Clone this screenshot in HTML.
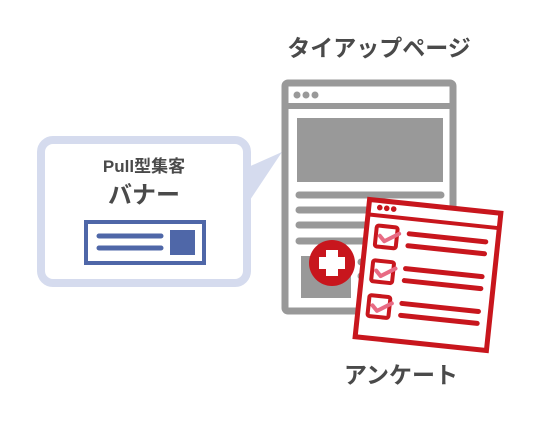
<!DOCTYPE html>
<html><head><meta charset="utf-8"><style>
body{margin:0;width:537px;height:422px;background:#fff;overflow:hidden}
svg{display:block}
text{font-family:"Liberation Sans","Noto Sans CJK JP",sans-serif;font-weight:bold;fill:#4a4a4a}
</style></head><body>
<svg width="537" height="422" viewBox="0 0 537 422">
<path d="M246,168 L282,152 L250,200 Z" fill="#d5dbee"/>
<rect x="41" y="140" width="206" height="143" rx="12" fill="#fff" stroke="#d5dbee" stroke-width="8"/>
<text x="144" y="172" font-size="17" text-anchor="middle">Pull型集客</text>
<text x="144" y="203" font-size="24" text-anchor="middle">バナー</text>
<rect x="86" y="222" width="118" height="41" fill="#fff" stroke="#4f67a8" stroke-width="4"/>
<line x1="99" y1="236" x2="161" y2="236" stroke="#4f67a8" stroke-width="5" stroke-linecap="round"/>
<line x1="99" y1="248" x2="161" y2="248" stroke="#4f67a8" stroke-width="5" stroke-linecap="round"/>
<rect x="170" y="230" width="25" height="25" fill="#4f67a8"/>
<text x="379" y="56" font-size="23" text-anchor="middle">タイアップページ</text>
<rect x="285" y="83" width="168" height="228" rx="3" fill="#fff" stroke="#999" stroke-width="7"/>
<rect x="285" y="103" width="168" height="6" fill="#999"/>
<circle cx="297" cy="95" r="3.5" fill="#999"/><circle cx="306" cy="95" r="3.5" fill="#999"/><circle cx="315" cy="95" r="3.5" fill="#999"/>
<rect x="297" y="118" width="146" height="64" fill="#999"/>
<g stroke="#999" stroke-width="7" stroke-linecap="round">
<line x1="299" y1="195" x2="441" y2="195"/><line x1="299" y1="210" x2="441" y2="210"/><line x1="299" y1="225" x2="441" y2="225"/><line x1="299" y1="241" x2="441" y2="241"/>
<line x1="361" y1="262" x2="380" y2="262"/><line x1="361" y1="276" x2="380" y2="276"/><line x1="361" y1="290" x2="380" y2="290"/>
</g>
<rect x="301" y="256" width="50" height="42" fill="#999"/>
<circle cx="332" cy="263" r="23" fill="#c8161d"/>
<path d="M326,250h12v7h7v12h-7v7h-12v-7h-7v-12h7z" fill="#fff"/>
<g transform="rotate(6 428 275)">
<rect x="362" y="206" width="132" height="138" fill="#fff" stroke="#c8161d" stroke-width="5"/>
<rect x="362" y="219" width="132" height="4" fill="#c8161d"/>
<circle cx="373" cy="213" r="2.8" fill="#c8161d"/><circle cx="380" cy="213" r="2.8" fill="#c8161d"/><circle cx="387" cy="213" r="2.8" fill="#c8161d"/>
<g fill="none" stroke="#c8161d" stroke-width="4">
<rect x="372" y="231" width="21" height="21" rx="2"/><rect x="372" y="266" width="21" height="21" rx="2"/><rect x="372" y="301" width="21" height="21" rx="2"/>
</g>
<g fill="none" stroke="#e86b84" stroke-width="4" stroke-linecap="round" stroke-linejoin="round">
<path d="M376,241l5,5l14,-9"/><path d="M376,276l5,5l14,-9"/><path d="M376,311l5,5l14,-9"/>
</g>
<g stroke="#c8161d" stroke-width="5" stroke-linecap="round">
<line x1="405" y1="236" x2="482" y2="236"/><line x1="405" y1="248" x2="482" y2="248"/>
<line x1="405" y1="271" x2="482" y2="271"/><line x1="405" y1="283" x2="482" y2="283"/>
<line x1="405" y1="306" x2="482" y2="306"/><line x1="405" y1="318" x2="482" y2="318"/>
</g>
</g>
<text x="401" y="383" font-size="23" text-anchor="middle">アンケート</text>
</svg>
</body></html>
